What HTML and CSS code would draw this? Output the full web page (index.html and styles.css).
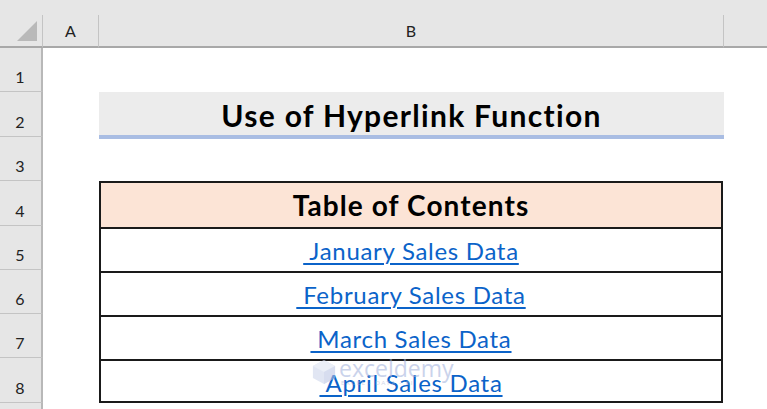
FILE: index.html
```html
<!DOCTYPE html>
<html>
<head>
<meta charset="utf-8">
<link rel="stylesheet" href="styles.css">
</head>
<body>
<div class="sheet">
  <div class="strip"></div>
  <div class="corner"><div class="tri"></div></div>
  <div class="colhead col-a">A</div>
  <div class="colhead col-b">B</div>
  <div class="colhead col-c"></div>

  <div class="rowhead r1">1</div>
  <div class="rowhead r2">2</div>
  <div class="rowhead r3">3</div>
  <div class="rowhead r4">4</div>
  <div class="rowhead r5">5</div>
  <div class="rowhead r6">6</div>
  <div class="rowhead r7">7</div>
  <div class="rowhead r8">8</div>
  <div class="rowhead r9"></div>

  <div class="title">Use of Hyperlink Function</div>

  <div class="toc">
    <div class="toc-head">Table of Contents</div>
    <div class="toc-row"><a class="link">&nbsp;January Sales Data</a></div>
    <div class="toc-row"><a class="link">&nbsp;February Sales Data</a></div>
    <div class="toc-row"><a class="link">&nbsp;March Sales Data</a></div>
    <div class="toc-row"><a class="link">&nbsp;April Sales Data</a></div>
    <div class="watermark">
      <svg class="wm-logo" width="24" height="28" viewBox="0 0 26 28">
        <polygon points="13,1 25,7.5 25,20.5 13,27 1,20.5 1,7.5" fill="#c9d3ea"/>
        <polygon points="13,1 25,7.5 13,14 1,7.5" fill="#dbe2f2"/>
        <polygon points="13,14 25,7.5 25,20.5 13,27" fill="#b7c3e2"/>
      </svg>
      <div class="wm-text">
        <span class="wm-name">exceldemy</span>
        <span class="wm-sub">EXCEL · DATA · BI</span>
      </div>
    </div>
  </div>
</div>
</body>
</html>
```
FILE: styles.css
```css
html, body {
  margin: 0;
  padding: 0;
  background: #ffffff;
}
body {
  width: 767px;
  height: 409px;
  overflow: hidden;
  font-family: Lato, "Open Sans", "Liberation Sans", sans-serif;
}
.sheet {
  display: grid;
  grid-template-columns: 43px 56px 625px 1fr;
  grid-template-rows: 15px 33px 44px 45px 44px 45px 44px 44px 44px 45px 1fr;
  width: 767px;
  height: 409px;
  background: #ffffff;
}
.strip {
  grid-column: 1 / 5;
  grid-row: 1;
  background: #e6e6e6;
}
.corner {
  grid-column: 1;
  grid-row: 2;
  background: #e6e6e6;
  border-bottom: 2px solid #a8a8a8;
  border-right: 1px solid #c4c4c4;
  display: flex;
  justify-content: flex-end;
  align-items: flex-end;
  padding: 0 5px 5px 0;
}
.tri {
  width: 0;
  height: 0;
  border-left: 20px solid transparent;
  border-bottom: 20px solid #b9b9b9;
}
.colhead {
  grid-row: 2;
  background: #e6e6e6;
  border-bottom: 2px solid #a8a8a8;
  border-right: 1px solid #c4c4c4;
  display: flex;
  align-items: center;
  justify-content: center;
  font-size: 16px;
  color: #222;
  padding-bottom: 1px;
}
.col-a { grid-column: 2; }
.col-b { grid-column: 3; }
.col-c { grid-column: 4; border-right: none; }

.rowhead {
  grid-column: 1;
  background: #e6e6e6;
  border-right: 2px solid #b8b8b8;
  border-bottom: 1px solid #c4c4c4;
  display: flex;
  align-items: center;
  justify-content: center;
  font-size: 16px;
  color: #222;
  padding-top: 14px;
  padding-right: 1px;
}
.r1 { grid-row: 3; }
.r2 { grid-row: 4; }
.r3 { grid-row: 5; }
.r4 { grid-row: 6; }
.r5 { grid-row: 7; }
.r6 { grid-row: 8; }
.r7 { grid-row: 9; }
.r8 { grid-row: 10; }
.r9 { grid-row: 11; border-bottom: none; }

.title {
  grid-column: 3;
  grid-row: 4;
  background: #ececec;
  border-bottom: 4px solid #a9bde3;
  margin-bottom: -2px;
  display: flex;
  align-items: center;
  justify-content: center;
  font-weight: bold;
  font-size: 30px;
  letter-spacing: 1.3px;
  color: #000;
  padding-top: 2px;
  position: relative;
  z-index: 1;
}

.toc {
  grid-column: 3;
  grid-row: 6 / 11;
  position: relative;
  display: grid;
  grid-template-rows: 44px 44px 44px 44px 44px;
  border: 2px solid #1a1a1a;
  margin-right: 1px;
}
.toc-head {
  background: #fce4d6;
  display: flex;
  align-items: center;
  justify-content: center;
  font-weight: bold;
  font-size: 28px;
  letter-spacing: 1.1px;
  color: #000;
}
.toc-row {
  border-top: 2px solid #1a1a1a;
  display: flex;
  align-items: center;
  justify-content: center;
}
.link {
  color: #0b63c9;
  font-size: 24px;
  letter-spacing: 0.7px;
  text-decoration: underline;
  text-decoration-thickness: 2px;
  text-underline-offset: 3px;
  white-space: pre;
}
.watermark {
  position: absolute;
  left: 211px;
  top: 174px;
  display: flex;
  align-items: center;
  gap: 3px;
  opacity: 0.55;
  pointer-events: none;
}
.wm-text {
  display: flex;
  flex-direction: column;
  line-height: 1;
}
.wm-name {
  font-size: 23px;
  color: #9fb0dc;
  font-family: "Open Sans", sans-serif;
}
.wm-sub {
  font-size: 6px;
  color: #a9b5d6;
  letter-spacing: 1.5px;
  padding-left: 2px;
}
```
